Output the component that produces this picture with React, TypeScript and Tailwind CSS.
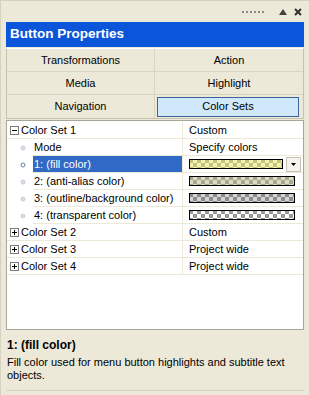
import React from "react";

function Swatch({ a, b, w, id }: { a: string; b: string; w: number; id: string }) {
  return (
    <svg width={w} height={10} className="block">
      <defs>
        <pattern id={id} width="8" height="8" patternUnits="userSpaceOnUse">
          <rect width="8" height="8" fill={a} />
          <rect x="0" y="0" width="4" height="4" fill={b} />
          <rect x="4" y="4" width="4" height="4" fill={b} />
        </pattern>
      </defs>
      <rect x="0.5" y="0.5" width={w - 1} height="9" fill={`url(#${id})`} stroke="#000" />
    </svg>
  );
}

function Box({ open }: { open: boolean }) {
  return (
    <svg width="9" height="9" className="block">
      <rect x="0.5" y="0.5" width="8" height="8" fill="#fff" stroke="#7a7a7a" />
      <line x1="2" y1="4.5" x2="7" y2="4.5" stroke="#000" />
      {!open && <line x1="4.5" y1="2" x2="4.5" y2="7" stroke="#000" />}
    </svg>
  );
}

function Dot({ sel }: { sel?: boolean }) {
  return (
    <svg width="6" height="6" className="block">
      <circle cx="3" cy="3" r="2" fill={sel ? "#fff" : "#d8dde8"} stroke={sel ? "#6b7fa5" : "#c7ccd8"} />
    </svg>
  );
}

type Row = {
  label: string;
  kind: "group" | "child";
  open?: boolean;
  value?: string;
  swatch?: [string, string];
  sel?: boolean;
};

const rows: Row[] = [
  { label: "Color Set 1", kind: "group", open: true, value: "Custom" },
  { label: "Mode", kind: "child", value: "Specify colors" },
  { label: "1: (fill color)", kind: "child", swatch: ["#f4f4a8", "#c4c488"], sel: true },
  { label: "2: (anti-alias color)", kind: "child", swatch: ["#dcdcc4", "#a8a890"] },
  { label: "3: (outline/background color)", kind: "child", swatch: ["#d4d4d4", "#8c8c8c"] },
  { label: "4: (transparent color)", kind: "child", swatch: ["#ffffff", "#9a9a9a"] },
  { label: "Color Set 2", kind: "group", open: false, value: "Custom" },
  { label: "Color Set 3", kind: "group", open: false, value: "Project wide" },
  { label: "Color Set 4", kind: "group", open: false, value: "Project wide" },
];

export default function App() {
  return (
    <div
      className="w-[309px] h-[395px] bg-[#ECE9D8] flex flex-col text-[11px] text-black overflow-hidden border-l border-t border-[#d6d2c2]"
      style={{ fontFamily: '"Liberation Sans", Arial, sans-serif' }}
    >
      {/* top strip */}
      <div className="h-[21px] flex items-center justify-end pr-[7px] gap-[7px] shrink-0">
        <div className="flex gap-[2px] mr-[8px] mt-[1px]">
          {[0, 1, 2, 3, 4, 5].map((i) => (
            <span key={i} className="w-[2px] h-[2px] bg-[#8a8a8a]" />
          ))}
        </div>
        <svg width="8" height="6" className="block">
          <polygon points="0,6 4,0 8,6" fill="#404040" />
        </svg>
        <svg width="8" height="8" className="block">
          <path d="M1 1 L7 7 M7 1 L1 7" stroke="#303030" strokeWidth="2" />
        </svg>
      </div>

      {/* header */}
      <div className="mx-[5px] h-[25px] bg-[#0B55DB] text-white font-bold text-[13.5px] flex items-center pl-[4px] shrink-0">
        Button Properties
      </div>

      {/* tabs */}
      <div className="mx-[5px] mt-[1px] grid grid-cols-2 border-l border-r border-b border-[#c4c1b0] shrink-0 border-t border-t-white">
        {[
          ["Transformations", "Action"],
          ["Media", "Highlight"],
          ["Navigation", "Color Sets"],
        ].map((pair, ri) => (
          <React.Fragment key={ri}>
            {pair.map((t, ci) => {
              const active = t === "Color Sets";
              return (
                <div
                  key={t}
                  className={`h-[23px] flex items-center justify-center ${ri < 2 ? "border-b border-[#d8d4c4]" : ""} ${ci === 0 ? "border-r border-[#d8d4c4]" : ""}`}
                >
                  {active ? (
                    <div className="w-full h-[20px] ml-[2px] mr-[4px] bg-[#D0E8FC] border border-[#3d629c] flex items-center justify-center">
                      {t}
                    </div>
                  ) : (
                    t
                  )}
                </div>
              );
            })}
          </React.Fragment>
        ))}
      </div>

      {/* property grid */}
      <div className="mx-[5px] mt-[1px] h-[210px] bg-white border border-[#a7a69a] shrink-0 pt-[1px]">
        {rows.map((r) => (
          <div key={r.label} className="h-[17px] flex">
            <div className="w-[175px] flex items-center shrink-0 relative">
              {r.kind === "group" ? (
                <div className="pl-[3px] flex items-center gap-[2px] h-full border-b border-[#ece9d8] w-full">
                  <Box open={!!r.open} />
                  <span>{r.label}</span>
                </div>
              ) : (
                <div className="flex items-center h-full w-full">
                  <div className="w-[26px] flex justify-center pl-[6px] shrink-0">
                    <Dot sel={r.sel} />
                  </div>
                  <div
                    className={`flex-1 h-full flex items-center border-b border-[#ece9d8] whitespace-nowrap overflow-hidden ${r.sel ? "bg-[#316AC5] text-white" : ""}`}
                  >
                    <span className="pl-[1px]">{r.label}</span>
                  </div>
                </div>
              )}
            </div>
            <div className="flex-1 border-l border-[#ece9d8] border-b flex items-center pl-[6px]">
              {r.value && <span>{r.value}</span>}
              {r.swatch &&
                (r.sel ? (
                  <div className="flex items-center gap-[3px]">
                    <Swatch a={r.swatch[0]} b={r.swatch[1]} w={94} id={r.label.slice(0, 1) + "s"} />
                    <div className="w-[15px] h-[15px] flex items-center justify-center bg-[#f4f3ee] border border-[#c5c2b2]">
                      <svg width="5" height="3"><polygon points="0,0 5,0 2.5,3" fill="#000" /></svg>
                    </div>
                  </div>
                ) : (
                  <Swatch a={r.swatch[0]} b={r.swatch[1]} w={106} id={r.label.slice(0, 1) + "s"} />
                ))}
            </div>
          </div>
        ))}
      </div>

      {/* description */}
      <div className="mx-[5px] mt-[8px] px-[1px] flex-1 border-b border-[#d6d2c2] mb-[4px]">
        <div className="font-bold text-[12px] leading-[15px]">1: (fill color)</div>
        <div className="mt-[3px] leading-[13px]">
          Fill color used for menu button highlights and subtitle text objects.
        </div>
      </div>
    </div>
  );
}
